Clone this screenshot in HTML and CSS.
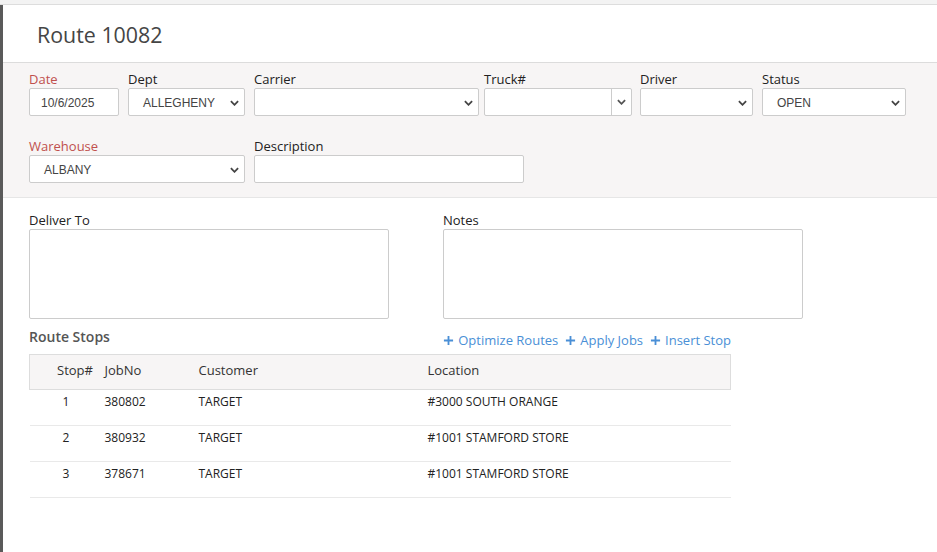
FILE: index.html
```html
<!DOCTYPE html>
<html>
<head>
<meta charset="utf-8">
<title>Route 10082</title>
<link rel="stylesheet" href="styles.css">
</head>
<body>
<div class="topstrip"></div>
<div class="page">
  <div class="titlebar"><h1 class="title">Route 10082</h1></div>

  <div class="header">
    <div class="row">
      <div class="field w-date">
        <label class="lbl req">Date</label>
        <input class="ctl date" value="10/6/2025">
      </div>
      <div class="field w-dept">
        <label class="lbl">Dept</label>
        <div class="sel"><span class="val">ALLEGHENY</span><svg class="chev" viewBox="0 0 10 6"><path d="M1 1l4 4 4-4" /></svg></div>
      </div>
      <div class="field w-carrier">
        <label class="lbl">Carrier</label>
        <div class="sel"><span class="val"></span><svg class="chev" viewBox="0 0 10 6"><path d="M1 1l4 4 4-4" /></svg></div>
      </div>
      <div class="field w-truck">
        <label class="lbl">Truck#</label>
        <div class="combo"><span class="comboval"></span><span class="combobtn"><svg class="chev2" viewBox="0 0 10 6"><path d="M1 1l4 4 4-4" /></svg></span></div>
      </div>
      <div class="field w-driver">
        <label class="lbl">Driver</label>
        <div class="sel"><span class="val"></span><svg class="chev" viewBox="0 0 10 6"><path d="M1 1l4 4 4-4" /></svg></div>
      </div>
      <div class="field w-status">
        <label class="lbl">Status</label>
        <div class="sel"><span class="val">OPEN</span><svg class="chev" viewBox="0 0 10 6"><path d="M1 1l4 4 4-4" /></svg></div>
      </div>
    </div>
    <div class="row row2">
      <div class="field w-wh">
        <label class="lbl req">Warehouse</label>
        <div class="sel"><span class="val">ALBANY</span><svg class="chev" viewBox="0 0 10 6"><path d="M1 1l4 4 4-4" /></svg></div>
      </div>
      <div class="field w-desc">
        <label class="lbl">Description</label>
        <input class="ctl" value="">
      </div>
    </div>
  </div>

  <div class="body">
    <div class="notes">
      <div class="field">
        <label class="lbl">Deliver To</label>
        <textarea class="area"></textarea>
      </div>
      <div class="field">
        <label class="lbl">Notes</label>
        <textarea class="area"></textarea>
      </div>
    </div>

    <div class="stops">
      <div class="toolbar">
        <h2 class="stitle">Route Stops</h2>
        <div class="links">
          <a class="lnk"><svg class="plus" viewBox="0 0 12 12"><path d="M6 1v10M1 6h10" /></svg>Optimize Routes</a>
          <a class="lnk"><svg class="plus" viewBox="0 0 12 12"><path d="M6 1v10M1 6h10" /></svg>Apply Jobs</a>
          <a class="lnk"><svg class="plus" viewBox="0 0 12 12"><path d="M6 1v10M1 6h10" /></svg>Insert Stop</a>
        </div>
      </div>
      <table class="grid">
        <colgroup><col class="c1"><col class="c2"><col class="c3"><col class="c4"></colgroup>
        <thead>
          <tr><th class="stopno">Stop#</th><th>JobNo</th><th>Customer</th><th>Location</th></tr>
        </thead>
        <tbody>
          <tr><td class="stopno">1</td><td>380802</td><td>TARGET</td><td>#3000 SOUTH ORANGE</td></tr>
          <tr><td class="stopno">2</td><td>380932</td><td>TARGET</td><td>#1001 STAMFORD STORE</td></tr>
          <tr><td class="stopno">3</td><td>378671</td><td>TARGET</td><td>#1001 STAMFORD STORE</td></tr>
        </tbody>
      </table>
    </div>
  </div>
</div>
</body>
</html>
```

FILE: styles.css
```css
html, body {
  margin: 0;
  padding: 0;
  background: #ffffff;
  font-family: "Open Sans", "Noto Sans", sans-serif;
  color: #222;
}

.topstrip {
  height: 4px;
  background: #f3f3f3;
  border-bottom: 1px solid #dddddd;
}

.page {
  border-left: 3px solid #5a5a5a;
  min-height: 547px;
  box-sizing: border-box;
}

.titlebar {
  height: 57px;
  display: flex;
  align-items: center;
  padding-left: 34px;
  box-sizing: border-box;
}

.title {
  margin: 0;
  font-size: 21.4px;
  font-weight: 400;
  color: #454545;
  line-height: 1;
  position: relative;
  top: 1px;
}

.header {
  background: #f7f5f5;
  border-top: 1px solid #dcdcdc;
  border-bottom: 1px solid #e6e6e6;
  padding: 8px 0 14px 26px;
}

.row {
  display: flex;
}

.row2 {
  margin-top: 22px;
}

.field {
  display: flex;
  flex-direction: column;
}

.lbl {
  display: block;
  font-size: 13px;
  line-height: 17px;
  height: 17px;
  color: #222;
}

.lbl.req {
  color: #c0504d;
}

.w-date { width: 99px; }
.w-date .ctl { width: 90px; }
.w-dept { width: 126px; }
.w-dept .sel { width: 117px; }
.w-carrier { width: 230px; }
.w-carrier .sel { width: 225px; }
.w-truck { width: 156px; }
.w-truck .combo { width: 148px; }
.w-driver { width: 122px; }
.w-driver .sel { width: 113px; }
.w-status { width: 144px; }
.w-status .sel { width: 144px; }
.w-wh { width: 225px; }
.w-wh .sel { width: 216px; }
.w-desc { width: 270px; }
.w-desc .ctl { width: 270px; }

.ctl {
  box-sizing: border-box;
  height: 28px;
  border: 1px solid #cccccc;
  border-radius: 2px;
  background: #fff;
  font-family: "Liberation Sans", Arial, sans-serif;
  font-size: 12px;
  color: #444;
  padding: 2px 0 0 11px;
  margin: 0;
  outline: none;
}

.sel {
  position: relative;
  box-sizing: border-box;
  height: 28px;
  border: 1px solid #cccccc;
  border-radius: 2px;
  background: #fff;
  display: flex;
  align-items: center;
  padding-left: 14px;
  padding-top: 2px;
}

.val {
  font-family: "Liberation Sans", Arial, sans-serif;
  font-size: 12px;
  color: #444;
}

.chev {
  position: absolute;
  right: 5px;
  top: 11px;
  width: 9px;
  height: 6px;
  fill: none;
  stroke: #444;
  stroke-width: 2;
}

.combo {
  box-sizing: border-box;
  height: 28px;
  border: 1px solid #cccccc;
  border-radius: 2px;
  background: #fff;
  display: flex;
}

.comboval {
  flex: 1;
}

.combobtn {
  width: 19px;
  border-left: 1px solid #cccccc;
  display: flex;
  align-items: center;
  justify-content: center;
}

.chev2 {
  width: 9px;
  height: 6px;
  fill: none;
  stroke: #555;
  stroke-width: 2;
}

.body {
  padding-left: 26px;
  padding-top: 14px;
}

.notes {
  display: flex;
  gap: 54px;
}

.area {
  box-sizing: border-box;
  width: 360px;
  height: 90px;
  border: 1px solid #cccccc;
  border-radius: 2px;
  resize: none;
  margin: 0;
  outline: none;
  background: #fff;
}

.stops {
  width: 702px;
  margin-top: 9px;
}

.toolbar {
  display: flex;
  justify-content: space-between;
  align-items: flex-end;
  height: 26px;
}

.stitle {
  margin: 0;
  font-size: 14px;
  font-weight: 600;
  color: #555;
  line-height: 18px;
  align-self: flex-start;
}

.links {
  display: flex;
  gap: 7px;
  padding-bottom: 6px;
}

.lnk {
  display: flex;
  align-items: center;
  font-size: 13px;
  line-height: 16px;
  color: #4a8fd6;
  cursor: pointer;
}

.plus {
  width: 11px;
  height: 11px;
  margin-right: 4px;
  fill: none;
  stroke: #4a8fd6;
  stroke-width: 2;
}

.grid {
  width: 702px;
  border-collapse: collapse;
  table-layout: fixed;
}

.c1 { width: 75px; }
.c2 { width: 94px; }
.c3 { width: 229px; }

.grid th {
  height: 35px;
  box-sizing: border-box;
  background: #f7f5f5;
  border-top: 1px solid #dddddd;
  border-bottom: 1px solid #dddddd;
  font-size: 13px;
  font-weight: 400;
  color: #333;
  text-align: left;
  padding: 0 0 5px 0;
}

.grid thead tr th:first-child { border-left: 1px solid #dddddd; }
.grid thead tr th:last-child { border-right: 1px solid #dddddd; }

.grid th.stopno { padding-left: 27px; }

.grid td {
  height: 36px;
  box-sizing: border-box;
  border-bottom: 1px solid #e9e9e9;
  font-size: 12px;
  color: #222;
  padding: 0 0 12px 0;
  vertical-align: middle;
}

.grid td.stopno { padding-left: 33px; }
```
